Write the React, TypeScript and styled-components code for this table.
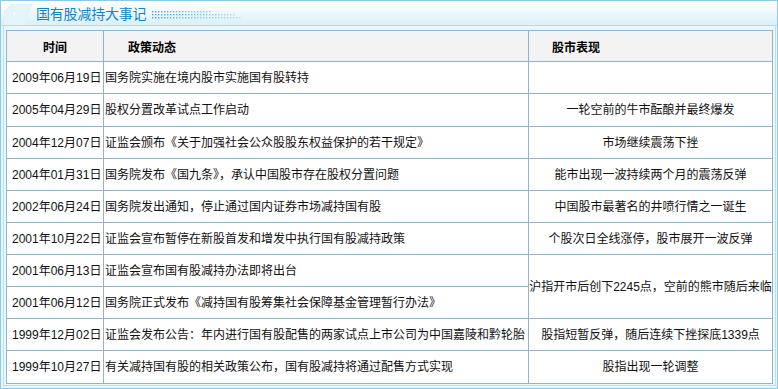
import React from "react";
import styled, { createGlobalStyle } from "styled-components";

const Global = createGlobalStyle`
  html, body { margin: 0; padding: 0; background: #ffffff; }
  body { font-family: "Liberation Sans", "Noto Sans CJK SC", sans-serif; }
`;

const Frame = styled.div`
  width: 778px;
  height: 389px;
  box-sizing: border-box;
  border: 1px solid #8ecbe8;
  display: flex;
  flex-direction: column;
  background: #e8f6fc;
`;

const TitleBar = styled.div`
  height: 24px;
  flex: none;
  border-bottom: 1px solid #b3dcf0;
  background: linear-gradient(#ffffff, #f2fafd 40%, #d8f0fb);
  display: flex;
  align-items: center;
`;

const Tab = styled.svg`
  flex: none;
  width: 32px;
  height: 24px;
  display: block;
`;

const TitleText = styled.span`
  font-family: "Noto Sans CJK SC", sans-serif;
  font-size: 14px;
  line-height: 24px;
  color: #0f86c8;
  margin-left: 3px;
  letter-spacing: -0.2px;
`;

const Dots = styled.svg`
  flex: none;
  width: 92px;
  height: 24px;
  margin-left: 6px;
  display: block;
`;

const Body = styled.div`
  flex: 1;
  padding: 0 2px 2px 2px;
  display: flex;
`;

const Inner = styled.div`
  flex: 1;
  border: 1px solid #b8e0f3;
  border-top: none;
  padding: 4px 2px 1px 2px;
  background: #eaf7fd;
`;

const Table = styled.table`
  width: 766px;
  border-collapse: collapse;
  table-layout: fixed;
  background: #ffffff;
  font-family: "Liberation Sans", "Noto Sans CJK SC", sans-serif;
  font-size: 12px;
  color: #111;
`;

const Row = styled.tr<{ $h: number }>`
  height: ${(p) => p.$h}px;
`;

const HeadCell = styled.th<{ $align: "center" | "left"; $pad?: number }>`
  border: 1px solid #92b3ca;
  background: #f3f3f3;
  font-family: "Noto Sans CJK SC", sans-serif;
  font-weight: 700;
  font-size: 12px;
  text-align: ${(p) => p.$align};
  padding: 0 0 0 ${(p) => p.$pad ?? 0}px;
  color: #000;
`;

const Cell = styled.td<{ $align?: "center" | "left"; $pad?: number }>`
  border: 1px solid #92b3ca;
  text-align: ${(p) => p.$align ?? "left"};
  padding: 0 0 0 ${(p) => p.$pad ?? 0}px;
  white-space: nowrap;
  overflow: hidden;
  line-height: 14px;
  vertical-align: middle;
`;

type Item = { date: string; policy: string; market?: string; span?: number; skip?: boolean; h: number };

const items: Item[] = [
  { date: "2009年06月19日", policy: "国务院实施在境内股市实施国有股转持", market: "", h: 32 },
  { date: "2005年04月29日", policy: "股权分置改革试点工作启动", market: "一轮空前的牛市酝酿并最终爆发", h: 33 },
  { date: "2004年12月07日", policy: "证监会颁布《关于加强社会公众股股东权益保护的若干规定》", market: "市场继续震荡下挫", h: 32 },
  { date: "2004年01月31日", policy: "国务院发布《国九条》，承认中国股市存在股权分置问题", market: "能市出现一波持续两个月的震荡反弹", h: 32 },
  { date: "2002年06月24日", policy: "国务院发出通知，停止通过国内证券市场减持国有股", market: "中国股市最著名的井喷行情之一诞生", h: 32 },
  { date: "2001年10月22日", policy: "证监会宣布暂停在新股首发和增发中执行国有股减持政策", market: "个股次日全线涨停，股市展开一波反弹", h: 32 },
  { date: "2001年06月13日", policy: "证监会宣布国有股减持办法即将出台", market: "沪指开市后创下2245点，空前的熊市随后来临", span: 2, h: 32 },
  { date: "2001年06月12日", policy: "国务院正式发布《减持国有股筹集社会保障基金管理暂行办法》", skip: true, h: 32 },
  { date: "1999年12月02日", policy: "证监会发布公告：年内进行国有股配售的两家试点上市公司为中国嘉陵和黔轮胎", market: "股指短暂反弹，随后连续下挫探底1339点", h: 32 },
  { date: "1999年10月27日", policy: "有关减持国有股的相关政策公布，国有股减持将通过配售方式实现", market: "股指出现一轮调整", h: 33 },
];

function DotField() {
  const rows = [
    { y: 10, len: 60 },
    { y: 13, len: 82 },
    { y: 16, len: 88 },
  ];
  const dots: React.ReactNode[] = [];
  rows.forEach((r, ri) => {
    for (let x = 0; x < r.len; x += 3) {
      const t = x / 90;
      dots.push(
        <rect key={`${ri}-${x}`} x={x} y={r.y} width={1.4} height={1.4} fill="#2a9ad6" opacity={0.85 - t * 0.6} />
      );
    }
  });
  return (
    <Dots viewBox="0 0 92 24">{dots}</Dots>
  );
}

export default function App() {
  return (
    <>
      <Global />
      <Frame>
        <TitleBar>
          <Tab viewBox="0 0 32 24">
            <path d="M3 24 L3 9 L10 2 L32 2 L24 24 Z" fill="#e4f4fb" />
            <path d="M3 9 L10 2 L30 2" fill="none" stroke="#ffffff" strokeWidth="1.5" />
            <path d="M12 9 L16 12.5 L12 16 Z" fill="#f7fcfe" stroke="#cfe9f5" strokeWidth="0.6" />
          </Tab>
          <TitleText>国有股减持大事记</TitleText>
          <DotField />
        </TitleBar>
        <Body>
          <Inner>
            <Table>
              <colgroup>
                <col style={{ width: 97 }} />
                <col style={{ width: 425 }} />
                <col style={{ width: 244 }} />
              </colgroup>
              <thead>
                <Row $h={31}>
                  <HeadCell $align="center">时间</HeadCell>
                  <HeadCell $align="left" $pad={24}>政策动态</HeadCell>
                  <HeadCell $align="left" $pad={23}>股市表现</HeadCell>
                </Row>
              </thead>
              <tbody>
                {items.map((it) => (
                  <Row key={it.date} $h={it.h}>
                    <Cell $pad={5}>{it.date}</Cell>
                    <Cell $pad={1}>{it.policy}</Cell>
                    {it.skip ? null : (
                      <Cell $align="center" rowSpan={it.span ?? 1}>{it.market}</Cell>
                    )}
                  </Row>
                ))}
              </tbody>
            </Table>
          </Inner>
        </Body>
      </Frame>
    </>
  );
}
